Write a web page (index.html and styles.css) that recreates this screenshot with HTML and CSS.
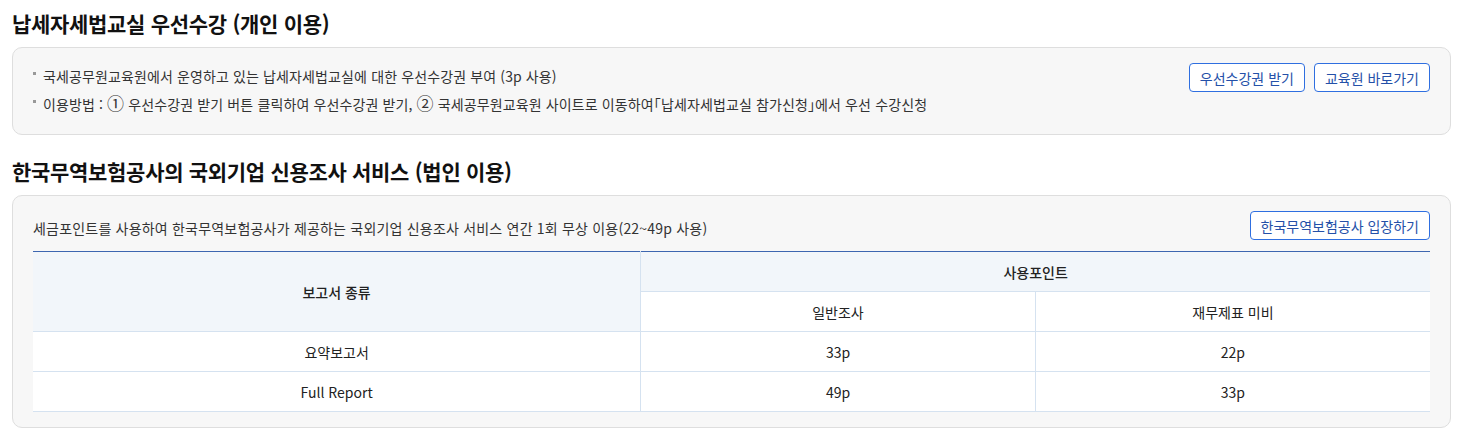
FILE: index.html
```html
<!DOCTYPE html>
<html lang="ko">
<head>
    <meta charset="UTF-8">
    <meta name="viewport" content="width=device-width, initial-scale=1.0">
    <title>세금포인트 혜택</title>
    <link rel="stylesheet" href="styles.css">
</head>
<body>
    <div class="page">
        <h2 class="section-title">납세자세법교실 우선수강 (개인 이용)</h2>
        <div class="info-box">
            <div class="info-row">
                <ul class="bullet-list">
                    <li>국세공무원교육원에서 운영하고 있는 납세자세법교실에 대한 우선수강권 부여 (3p 사용)</li>
                    <li>이용방법 : <span class="num">①</span> 우선수강권 받기 버튼 클릭하여 우선수강권 받기, <span class="num">②</span> 국세공무원교육원 사이트로 이동하여｢납세자세법교실 참가신청｣에서 우선 수강신청</li>
                </ul>
                <div class="btn-group">
                    <button class="btn-line">우선수강권 받기</button>
                    <button class="btn-line">교육원 바로가기</button>
                </div>
            </div>
        </div>

        <h2 class="section-title">한국무역보험공사의 국외기업 신용조사 서비스 (법인 이용)</h2>
        <div class="info-box">
            <div class="info-head">
                <p class="desc">세금포인트를 사용하여 한국무역보험공사가 제공하는 국외기업 신용조사 서비스 연간 1회 무상 이용(22~49p 사용)</p>
                <button class="btn-line">한국무역보험공사 입장하기</button>
            </div>
            <table class="point-table">
                <colgroup>
                    <col class="col-type">
                    <col class="col-point">
                    <col class="col-point">
                </colgroup>
                <thead>
                    <tr>
                        <th rowspan="2">보고서 종류</th>
                        <th colspan="2">사용포인트</th>
                    </tr>
                    <tr>
                        <th class="sub">일반조사</th>
                        <th class="sub">재무제표 미비</th>
                    </tr>
                </thead>
                <tbody>
                    <tr>
                        <td>요약보고서</td>
                        <td>33p</td>
                        <td>22p</td>
                    </tr>
                    <tr>
                        <td>Full Report</td>
                        <td>49p</td>
                        <td>33p</td>
                    </tr>
                </tbody>
            </table>
        </div>
    </div>
</body>
</html>
```

FILE: styles.css
```css
body {
    font-family: "Noto Sans CJK KR", "Noto Sans", sans-serif;
    background-color: #ffffff;
    color: #222222;
    margin: 0;
    padding: 0;
}
.page {
    padding: 9px 10px 0 12px;
}
.section-title {
    font-size: 21px;
    line-height: 28px;
    font-weight: 700;
    letter-spacing: -0.3px;
    color: #111111;
    margin: 0 0 10px;
}
.info-box {
    background: #f7f7f7;
    border: 1px solid #dedede;
    border-radius: 10px;
    padding: 14px 20px 16px;
    margin-bottom: 22px;
}
.info-box:last-child {
    padding-top: 15px;
    padding-bottom: 15px;
}
.info-row {
    display: flex;
    justify-content: space-between;
    align-items: flex-start;
}
.bullet-list {
    list-style: none;
    margin: 0;
    padding: 0;
    font-size: 14px;
    line-height: 28px;
    letter-spacing: 0.12px;
    color: #333333;
}
.bullet-list li {
    position: relative;
    padding-left: 10px;
}
.bullet-list li::before {
    content: "";
    position: absolute;
    left: 0;
    top: 10px;
    width: 3px;
    height: 3px;
    background: #999999;
}
.num {
    font-size: 17px;
    line-height: 1;
}
.btn-group {
    display: flex;
    gap: 9px;
    margin-top: 1px;
}
.btn-line {
    font-family: inherit;
    font-size: 14px;
    height: 29px;
    padding: 0 10px;
    background: #ffffff;
    color: #2450a8;
    border: 1px solid #2f6fe0;
    border-radius: 4px;
    cursor: pointer;
}
.info-head {
    display: flex;
    justify-content: space-between;
    align-items: flex-end;
    margin-bottom: 11px;
}
.desc {
    margin: 0;
    font-size: 14px;
    line-height: 20px;
    letter-spacing: 0.2px;
    padding-bottom: 2px;
    color: #333333;
}
.point-table {
    width: 100%;
    table-layout: fixed;
    border-collapse: collapse;
    border-top: 1px solid #3d66b0;
    font-size: 14px;
    background: #ffffff;
}
.col-type {
    width: 43.5%;
}
.col-point {
    width: 28.25%;
}
.point-table th,
.point-table td {
    height: 39px;
    padding: 0;
    text-align: center;
    border-bottom: 1px solid #d5e2f0;
    border-left: 1px solid #d5e2f0;
}
.point-table th:first-child,
.point-table td:first-child {
    border-left: none;
}
.point-table th {
    background: #f2f6fa;
    font-weight: 500;
    color: #222222;
}
.point-table th.sub {
    background: #ffffff;
    font-weight: 400;
}
.point-table tr:nth-child(2) th.sub:first-child {
    border-left: 1px solid #d5e2f0;
}
```
